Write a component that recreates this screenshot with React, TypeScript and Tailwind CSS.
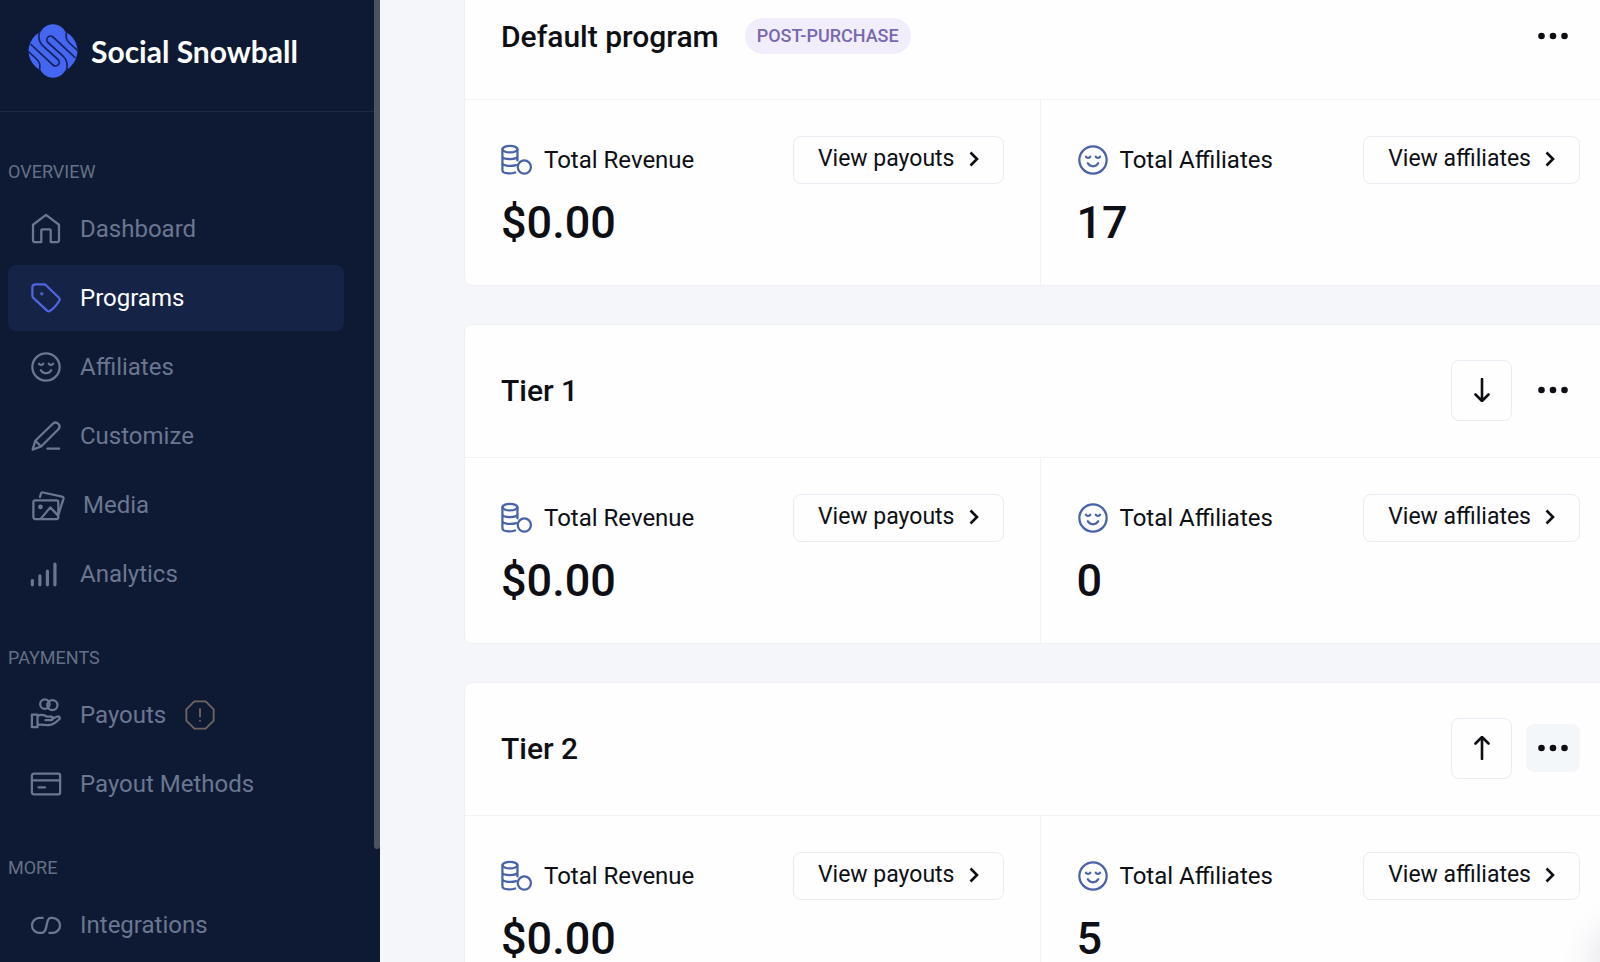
import type { ReactNode } from "react";

function Icon({ children, className = "" }: { children: ReactNode; className?: string }) {
  return (
    <svg
      viewBox="-1 -1 34 34"
      fill="none"
      stroke="currentColor"
      strokeWidth={2.4}
      strokeLinecap="round"
      strokeLinejoin="round"
      aria-hidden="true"
      className={`h-8 shrink-0 ${className}`}
    >
      {children}
    </svg>
  );
}

const smile = (
  <>
    <circle cx="16" cy="16" r="14.500" />
    <path d="M8.500 12.500c.8 1.600 3.800 1.600 4.600 0M18.900 12.500c.8 1.600 3.800 1.600 4.600 0M10.500 19.500c2.400 4.200 8.600 4.200 11 0" />
  </>
);

const icons = {
  home: <path d="M2.200 11.500 16 1l13.800 10.500V28a2 2 0 0 1-2 2H21V17.500a1 1 0 0 0-1-1h-8a1 1 0 0 0-1 1V30H4.200a2 2 0 0 1-2-2z" />,
  tag: (
    <>
      <path d="M1.500 5Q1.500 1.500 5 1.500h8.800q1.200 0 2.200.9L30 16a2 2 0 0 1 .2 2.600q-4.200 7.400-10.200 11.200a2 2 0 0 1-2.600-.2L2.500 15.800q-1-1-1-2.400z" />
      <circle cx="11.500" cy="11.500" r=".6" fill="currentColor" />
    </>
  ),
  smile,
  pen: (
    <>
      <path d="M1.800 30.500 4.600 21 23.500 2.700a4.200 4.200 0 0 1 5.900 5.900L10.800 27.200zM4.600 21l6.200 6.200" />
      <path d="M17.500 29.500h12.500" />
    </>
  ),
  media: (
    <>
      <rect x="1" y="11" width="26.500" height="20" rx="2" />
      <circle cx="8.500" cy="18" r="1.300" />
      <path d="m9 30.500 10-12 8 8.500M8 7.500l1-3.500a2 2 0 0 1 2.400-1.300L31.500 7A2 2 0 0 1 33 9.400l-5.200 16" />
    </>
  ),
  bars: <path strokeWidth={3.400} d="M1.500 23v4.500M9.500 18v9.500M17.500 13v14.500M25.500 5.500v22" />,
  hand: (
    <>
      <circle cx="14.800" cy="4.500" r="5" />
      <circle cx="22.800" cy="5.500" r="5.400" />
      <path d="M1 15.500h6v13.500H1zM7 17c4-2 7-1.500 10 .8h4.500c2.500 0 2.500 3.500 0 3.700h-6M22.500 20l5-2.200c2.500-.9 4.300 1.200 2.300 3-5 5-8.500 6.500-13 6L7 26" />
    </>
  ),
  card: (
    <>
      <rect x="1" y="5" width="30" height="22" rx="2" />
      <path d="M1 12.200h30M8 19.500h7" />
    </>
  ),
  link: <path d="M12.500 8.500H9a7.800 7.800 0 0 0 0 15.800h2.500c7 0 3.500-15.800 9.500-15.800h2a7.800 7.800 0 0 1 0 15.800h-3.500" />,
};

type IconName = keyof typeof icons;

const sections: { title: string; items: { label: string; icon: IconName; active?: boolean; alert?: boolean }[] }[] = [
  {
    title: "OVERVIEW",
    items: [
      { label: "Dashboard", icon: "home" },
      { label: "Programs", icon: "tag", active: true },
      { label: "Affiliates", icon: "smile" },
      { label: "Customize", icon: "pen" },
      { label: "Media", icon: "media" },
      { label: "Analytics", icon: "bars" },
    ],
  },
  {
    title: "PAYMENTS",
    items: [
      { label: "Payouts", icon: "hand", alert: true },
      { label: "Payout Methods", icon: "card" },
    ],
  },
  { title: "MORE", items: [{ label: "Integrations", icon: "link" }] },
];

const strand = "M11.500 8C9.500 15 11.500 18.500 15 22L30 35.500A3.600 3.600 0 0 1 25 41L3 20.500M11.500 46C12.500 40 11.500 38 8.500 35L.5 27.500";

function Logo() {
  return (
    <a href="#home" className="flex items-center gap-[13px]">
      <svg viewBox="0 0 50 54" className="h-[54px] w-[50px]" aria-hidden="true">
        <g fill="#4466f0">
          <ellipse cx="25" cy="27" rx="24.500" ry="22.500" />
          <circle cx="25" cy="14" r="13.800" />
          <circle cx="25" cy="40" r="13.800" />
        </g>
        <g fill="none" stroke="#14235f" strokeWidth="1.700" strokeLinecap="round">
          <path d={strand} />
          <path d={strand} transform="rotate(180 25 27)" />
        </g>
      </svg>
      <span className="font-['Lato',sans-serif] text-[30px] font-bold text-white">Social Snowball</span>
    </a>
  );
}

function Sidebar() {
  return (
    <aside className="flex w-[380px] shrink-0 items-start overflow-hidden bg-[#0e1a34]">
      <div className="grow">
        <div className="flex h-28 items-start border-b border-[#1a2a40] px-7 pt-6">
          <Logo />
        </div>
        <nav className="flex flex-col gap-[37px] pt-[46px] pr-[30px] pl-2">
          {sections.map((section) => (
            <div key={section.title}>
              <h2 className="mb-[10px] text-lg leading-7 text-[#667085]">{section.title}</h2>
              <ul className="flex flex-col gap-[3px]">
                {section.items.map((item) => (
                  <li key={item.label}>
                    <a
                      href={`#${item.label}`}
                      className={`flex h-[66px] items-center gap-[18px] rounded-lg px-[22px] text-2xl ${
                        item.active ? "bg-[#152347] text-white" : "text-[#6b7690]"
                      }`}
                    >
                      <Icon className={`overflow-visible ${item.icon === "media" ? "w-[35px]" : "w-8"} ${item.active ? "text-[#5065e0]" : ""}`}>
                        {icons[item.icon]}
                      </Icon>
                      {item.label}
                      {item.alert && (
                        <Icon className="w-8 text-[#6f645f]">
                          <path strokeWidth={2} d="M10 1.500h12l8.500 8.500v12l-8.500 8.500H10L1.500 22V10zM16 9.500v8M16 22v.2" />
                        </Icon>
                      )}
                    </a>
                  </li>
                ))}
              </ul>
            </div>
          ))}
        </nav>
      </div>
      <div className="h-[849px] w-1.5 shrink-0 rounded-b bg-[#4b5261]" />
    </aside>
  );
}

function Stat({ icon, label, value, action }: { icon: ReactNode; label: string; value: string; action: string }) {
  return (
    <div className="px-9 pt-9">
      <div className="flex items-center justify-between">
        <div className="flex items-center gap-[11px] text-2xl">
          <Icon className="w-8 text-[#4a63a8]">{icon}</Icon>
          {label}
        </div>
        <button className="flex h-12 items-center gap-[14px] rounded-lg border border-[#ebe9f1] px-6 pb-0.5 text-[23px]">
          {action}
          <svg viewBox="0 0 10 16" className="h-4 w-2.5" fill="none" stroke="currentColor" strokeWidth="2.600" aria-hidden="true">
            <path d="m1.500 1.500 6.500 6.500-6.500 6.500" />
          </svg>
        </button>
      </div>
      <p className="mt-[9px] text-[45px] leading-[60px] font-medium">{value}</p>
    </div>
  );
}

const coins = (
  <>
    <ellipse cx="8.500" cy="4.500" rx="8" ry="3.400" />
    <path d="M.5 4.500V26.500c0 4 8 4.500 13.500 2.800M16.500 4.500V16.500M.5 12c0 4 16 4 16 0M.5 19c0 3.600 9.500 4 14.500 2.400" />
    <circle cx="23.800" cy="23.500" r="7" />
  </>
);

type Program = { name: string; badge?: string; move?: "up" | "down"; affiliates: string; hovered?: boolean };

const programs: Program[] = [
  { name: "Default program", badge: "POST-PURCHASE", affiliates: "17" },
  { name: "Tier 1", move: "down", affiliates: "0" },
  { name: "Tier 2", move: "up", affiliates: "5", hovered: true },
];

function ProgramCard({ name, badge, move, affiliates, hovered }: Program) {
  return (
    <section className="rounded-lg border border-[#eff0f5] bg-[#fefefe]">
      <header className={`flex h-[133px] items-center gap-[14px] border-b border-[#f1f1f6] px-9 ${badge ? "pt-1.5" : "pb-0.5"}`}>
        <h2 className="text-[30px] font-medium">{name}</h2>
        {badge && (
          <span className="ml-3 rounded-full bg-[#f1edfa] px-3 py-1 text-lg font-medium text-[#7868b0]">{badge}</span>
        )}
        <div className="ml-auto flex items-center gap-[14px]">
          {move && (
            <button aria-label={`Move ${move}`} className="flex size-[61px] items-center justify-center rounded-lg border border-[#ebe9f1]">
              <svg viewBox="0 0 16 24" className="h-6 w-4" fill="none" stroke="currentColor" strokeWidth="2.600" strokeLinecap="round" strokeLinejoin="round" aria-hidden="true">
                <path d={move === "down" ? "M8 1v22M1.500 16.500 8 23l6.500-6.500" : "M8 23V1M1.500 7.500 8 1l6.500 6.500"} />
              </svg>
            </button>
          )}
          <button aria-label="More options" className={`flex h-12 w-[54px] items-center justify-center rounded-lg ${hovered ? "bg-[#f4f7fa]" : ""}`}>
            <svg viewBox="0 0 30 8" className="h-2 w-[30px]" fill="currentColor" aria-hidden="true">
              <circle cx="3.500" cy="4" r="3.300" />
              <circle cx="15" cy="4" r="3.300" />
              <circle cx="26.500" cy="4" r="3.300" />
            </svg>
          </button>
        </div>
      </header>
      <div className="grid h-[185px] grid-cols-2 divide-x divide-[#f1f1f6]">
        <Stat icon={coins} label="Total Revenue" value="$0.00" action="View payouts" />
        <Stat icon={smile} label="Total Affiliates" value={affiliates} action="View affiliates" />
      </div>
    </section>
  );
}

export default function App() {
  return (
    <div className="relative flex h-screen overflow-hidden bg-[#f5f6fa] font-['Roboto',sans-serif] text-[#0d0f14]">
      <Sidebar />
      <main className="-mt-[34px] -mr-[17px] flex min-w-0 grow flex-col gap-[38px] pl-[84px]">
        {programs.map((program) => (
          <ProgramCard key={program.name} {...program} />
        ))}
      </main>
      <div className="absolute -right-16 -bottom-8 size-16 rounded-full shadow-[0_0_32px_8px_rgba(60,60,120,0.13)]" />
    </div>
  );
}
